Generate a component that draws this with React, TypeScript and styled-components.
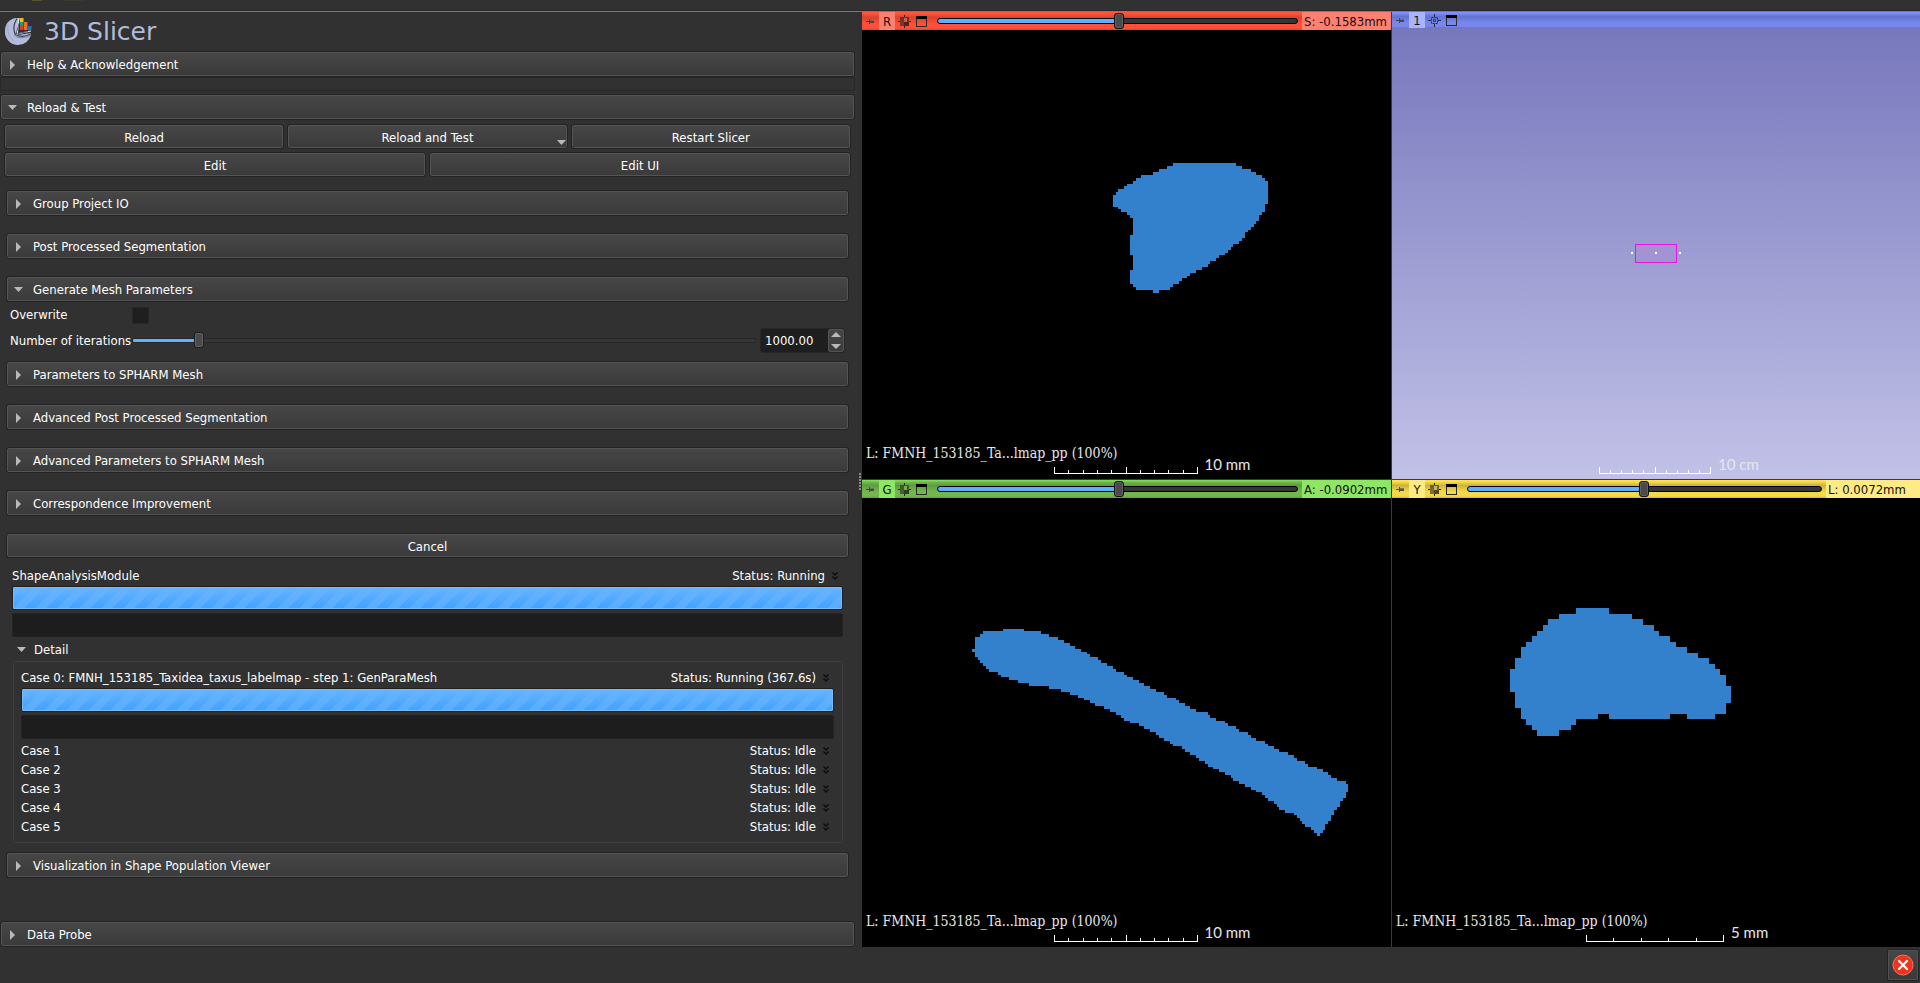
import React, { useState } from 'react';
import styled, { createGlobalStyle, css } from 'styled-components';

const GlobalStyle = createGlobalStyle`
  * { box-sizing: border-box; }
  body {
    margin: 0;
    background: #313131;
    color: #fff;
    font-family: "DejaVu Sans Condensed", "Noto Sans", sans-serif;
    font-size: 13px;
    line-height: 16px;
  }
  button, input { font: inherit; color: inherit; margin: 0; }
`;

/* ---------- shell ---------- */

const Shell = styled.div`
  min-height: 100vh;
  display: flex;
  flex-direction: column;
`;

const ToolbarEdge = styled.div`
  height: 12px;
  border-bottom: 1px solid #7c7c7c;
  box-shadow: inset 0 -1px 0 #282828;
  svg { display: block; margin-left: 28px; }
`;

const Main = styled.main`
  flex: 1;
  display: grid;
  grid-template-columns: minmax(0, 862fr) minmax(0, 1058fr);
`;

const StatusBar = styled.footer`
  height: 36px;
  display: flex;
  justify-content: flex-end;
`;

const ErrorButton = styled.button`
  width: 32px;
  height: 32px;
  margin: 2px 1px;
  padding: 0;
  display: grid;
  place-items: center;
  border: 1px solid #222;
  border-radius: 2px;
  background: linear-gradient(#464646, #3a3a3a);
  box-shadow: inset 0 0 0 1px #525252;
`;

/* ---------- module panel ---------- */

const Panel = styled.section`
  position: relative;
  display: flex;
  flex-direction: column;
  padding-right: 7px;
`;

const SplitGrip = styled.span`
  position: absolute;
  right: 1px;
  top: 461px;
  width: 2px;
  height: 17px;
  background: repeating-linear-gradient(#8a8a8a 0 2px, transparent 2px 3px);
`;

const Brand = styled.h1`
  margin: 0;
  height: 39px;
  padding-left: 4px;
  display: flex;
  align-items: center;
  gap: 11px;
  font: 400 25px/30px "DejaVu Sans", sans-serif;
  color: #b2bbdc;
`;

const raised = css`
  border: 1px solid #232323;
  border-radius: 3px;
  background: linear-gradient(#474747, #3a3a3a);
  box-shadow: inset 0 0 0 1px #545454;
  color: #fff;
`;

const Header = styled.button`
  ${raised}
  width: 100%;
  height: 26px;
  flex: none;
  display: flex;
  align-items: center;
  gap: 7px;
  padding: 1px 8px 0 7px;
  text-align: left;
`;

const ArrowBox = styled.svg`
  width: 12px;
  height: 12px;
  flex: none;
  fill: #b9b9b9;
`;

const EmptyFrame = styled.div`
  height: 14px;
  margin-bottom: 3px;
  border: 1px solid #282828;
`;

const ReloadBody = styled.div`
  display: flex;
  flex-direction: column;
  gap: 3px;
  padding: 4px 4px 3px;
`;

const ButtonRow = styled.div`
  display: flex;
  gap: 3px;
`;

const PushButton = styled.button`
  ${raised}
  position: relative;
  flex: 1 1 0;
  height: 25px;
  padding: 2px 8px 0;
  text-align: center;
`;

const MenuMark = styled(ArrowBox)`
  position: absolute;
  right: 0;
  bottom: 0;
`;

const Modules = styled.div`
  margin: 10px 6px 0;
`;

const Section = styled.div<{ $after?: number }>`
  margin-bottom: ${p => p.$after ?? 17}px;
`;

const Form = styled.div`
  display: grid;
  grid-template-columns: 120px 1fr;
  grid-template-rows: 26px 25px;
  align-items: center;
  column-gap: 2px;
  padding: 0 4px;
  label { white-space: nowrap; }
`;

const CheckBox = styled.input`
  appearance: none;
  width: 17px;
  height: 17px;
  background: #1f1f1f;
  border: 1px solid #272727;
`;

const SpinRow = styled.div`
  display: flex;
  align-items: center;
  gap: 4px;
`;

const IterSlider = styled.input`
  appearance: none;
  flex: 1;
  min-width: 0;
  height: 17px;
  background: transparent;
  &::-webkit-slider-runnable-track {
    height: 5px;
    border: 1px solid #272727;
    border-radius: 2px;
    background: linear-gradient(90deg, #5eb2ff var(--fill), #363636 var(--fill));
  }
  &::-webkit-slider-thumb {
    appearance: none;
    width: 10px;
    height: 16px;
    margin-top: -7px;
    border: 1px solid #1c1c1c;
    border-radius: 3px;
    background: #4a4a4a;
    box-shadow: inset 0 0 0 1px #666;
  }
`;

const SpinBox = styled.div`
  width: 85px;
  height: 25px;
  display: flex;
  border: 1px solid #262626;
  border-radius: 3px;
  background: #1e1e1e;
`;

const SpinInput = styled.input`
  flex: 1;
  min-width: 0;
  padding: 1px 4px 0;
  border: 0;
  background: transparent;
`;

const SpinButtons = styled.div`
  ${raised}
  border-width: 0;
  width: 16px;
  display: flex;
  flex-direction: column;
  button {
    flex: 1;
    padding: 0;
    border: 0;
    background: transparent;
    display: grid;
    place-items: center;
  }
`;

/* ---------- progress ---------- */

const Job = styled.div`
  padding: 8px 6px 9px;
`;

const JobLine = styled.div<{ $tall?: boolean }>`
  display: flex;
  align-items: center;
  height: ${p => (p.$tall ? 20 : 19)}px;
`;

const JobName = styled.span`
  flex: 1;
`;

const MoreButton = styled.button`
  width: 18px;
  height: 16px;
  padding: 0 0 0 2px;
  border: 0;
  background: transparent;
  display: grid;
  place-items: center;
`;

const ActiveBar = styled.div`
  height: 24px;
  margin-bottom: 3px;
  border: 1px solid #1f1f1f;
  border-radius: 2px;
  box-shadow: inset 0 0 0 1px #74bcff;
  background:
    linear-gradient(#68b4ff, #68b4ff00),
    linear-gradient(135deg, #58adff 25%, #40a2ff 25% 50%, #58adff 50% 75%, #40a2ff 75%) 0 0 / 22px 22px;
`;

const LogBox = styled.div`
  height: 24px;
  border: 1px solid #232323;
  border-radius: 2px;
  background: #1d1d1d;
`;

const DetailToggle = styled.button`
  display: flex;
  align-items: center;
  gap: 5px;
  height: 20px;
  margin: 3px 0 1px;
  padding: 0 5px;
  border: 0;
  background: transparent;
`;

const CaseGroup = styled.div`
  margin-left: 1px;
  padding: 6px 8px 6px 7px;
  border: 1px solid #3f3f3f;
  border-radius: 2px;
`;

const CaseList = styled.ul`
  list-style: none;
  margin: 2px 0 0;
  padding: 0;
`;

/* ---------- viewers ---------- */

const Viewers = styled.section`
  display: grid;
  grid-template-columns: minmax(0, 529fr) minmax(0, 528fr);
  grid-template-rows: 1fr 1fr;
  gap: 1px;
  background: #3a3a3a;
`;

const Viewer = styled.article`
  display: flex;
  flex-direction: column;
  min-height: 0;
`;

type Tone = { edge: string; dark: string; light: string; tag: string };

const tones: Record<string, Tone> = {
  red: { edge: '#ff553c', dark: '#d8432f', light: '#ff4f38', tag: '#ff8070' },
  blue: { edge: '#7d90ff', dark: '#6272cf', light: '#7787ee', tag: '#a9b3ff' },
  green: { edge: '#7fd957', dark: '#5e9d3f', light: '#72b64e', tag: '#8fe665' },
  yellow: { edge: '#ffe34d', dark: '#cdb43a', light: '#f4d94a', tag: '#ffeb83' },
};

const ViewBar = styled.header<{ $tone: Tone; $h: number }>`
  height: ${p => p.$h}px;
  display: flex;
  align-items: center;
  color: #111;
  background: linear-gradient(${p => p.$tone.edge} 0 1px, ${p => p.$tone.light} 2px, ${p => p.$tone.dark} 30%, ${p => p.$tone.light} 65%, ${p => p.$tone.light} 90%, ${p => p.$tone.dark});
`;

const IconButton = styled.button<{ $w: number }>`
  width: ${p => p.$w}px;
  height: 100%;
  padding: 0;
  border: 0;
  background: transparent;
  display: grid;
  place-items: center;
`;

const Tag = styled.span<{ $tone: Tone }>`
  width: 16px;
  height: 100%;
  margin-right: 2px;
  padding-top: 1px;
  display: grid;
  place-items: center;
  background: ${p => p.$tone.tag};
`;

const SliceSlider = styled.input`
  appearance: none;
  flex: 1;
  min-width: 0;
  height: 16px;
  margin: 0 4px 0 6px;
  background: transparent;
  &::-webkit-slider-runnable-track {
    height: 6px;
    border: 1px solid #000;
    border-radius: 3px;
    background: linear-gradient(90deg, #5eaeff var(--fill), #353535 var(--fill));
  }
  &::-webkit-slider-thumb {
    appearance: none;
    width: 10px;
    height: 16px;
    margin-top: -6px;
    border: 1px solid #111;
    border-radius: 3px;
    background: #4a4a4a;
    box-shadow: inset 0 0 0 1px #616161;
  }
`;

const Offset = styled.output<{ $tone: Tone; $w: number }>`
  min-width: ${p => p.$w}px;
  height: 100%;
  padding: 1px 2px 0;
  display: flex;
  align-items: center;
  background: ${p => p.$tone.tag};
`;

const Canvas = styled.div<{ $three?: boolean }>`
  position: relative;
  flex: 1;
  min-height: 0;
  background: ${p => (p.$three ? 'linear-gradient(#7777bd, #c2c2e8)' : '#000')};
`;

const Drawing = styled.svg`
  position: absolute;
  inset: 0;
  width: 100%;
  height: 100%;
`;

const Caption = styled.span`
  position: absolute;
  left: 4px;
  bottom: 16px;
  font: 14px/20px "DejaVu Serif Condensed", "Liberation Serif", serif;
  color: #e8e8e8;
`;

const Scale = styled.div<{ $w: number }>`
  position: absolute;
  left: calc(50% - 1px);
  bottom: 5px;
  width: ${p => p.$w}px;
  margin-left: -${p => p.$w / 2}px;
  svg { display: block; }
  span {
    position: absolute;
    left: 100%;
    bottom: 1px;
    margin-left: 7px;
    white-space: nowrap;
    font: 15px/18px Lato, sans-serif;
    color: #e6e6e6;
  }
`;

/* ---------- icons ---------- */

const Arrow = ({ open }: { open?: boolean }) => (
  <ArrowBox viewBox="0 0 12 12" aria-hidden>
    {open ? <path d="M0 3h9L4.500 8z" /> : <path d="M2 1v10l5-5z" />}
  </ArrowBox>
);

const Logo = () => (
  <svg width="29" height="29" viewBox="0 0 29 29" aria-hidden>
    <path d="M12 1C5 2 1 7 1 14a13 13 0 0 0 26 2l-13 2 1-17z" fill="#b3bcdd" />
    <path d="M13 1.500C10 6 9 12 11 17c4 3 10 3 16 0" fill="none" stroke="#3b3f4c" strokeWidth="1.200" />
    <path d="M15 1L13 17l14-3" fill="none" stroke="#e8ebf6" strokeWidth="1.200" />
    <path d="M12 17L15.500 5M12 17l12-2.500" fill="none" stroke="#555b70" />
    <path d="M10 18c5 4 12 3 17 0" fill="none" stroke="#8089a8" strokeWidth="1.200" />
    <path d="M4 8c-1 6 1 12 6 16" fill="none" stroke="#98a2c6" strokeWidth="1" />
    <rect x="16" y="1" width="3.500" height="4" fill="#f2c318" />
    <rect x="16" y="5" width="3.500" height="4" fill="#18a070" />
    <rect x="20" y="5" width="3.500" height="4" fill="#f06a20" />
    <rect x="16" y="9" width="3.500" height="4" fill="#e83820" />
    <rect x="20" y="9" width="3.500" height="4" fill="#f06a20" />
    <rect x="24" y="9" width="3.500" height="4" fill="#1f6fd0" />
  </svg>
);

const Pin = () => (
  <svg width="9" height="7" viewBox="0 0 9 7" aria-hidden opacity="0.85">
    <path d="M0 3h3V1h1v1h4v3H4v1H3V4H0z" fill="#3c3c3c" />
    <path d="M4 2h4v1H4z" fill="#6a6a6a" />
  </svg>
);

const SliceCross = ({ c }: { c: string }) => (
  <svg width="13" height="13" viewBox="0 0 13 13" shapeRendering="crispEdges" aria-hidden>
    <path d="M6 0h1v2H6zM6 11h1v2H6zM0 6h2v1H0zM11 6h2v1h-2z" fill="#222" />
    <rect x="2" y="2" width="9" height="9" fill="#241a16" opacity="0.55" />
    <rect x="6" y="3" width="3" height="4" fill={c} opacity="0.6" />
    <rect x="6" y="7" width="5" height="4" fill="#120c0a" opacity="0.4" />
  </svg>
);

const Target = () => (
  <svg width="13" height="13" viewBox="0 0 13 13" aria-hidden fill="none" stroke="#22283f">
    <path d="M6.500 0v3M6.500 10v3M0 6.500h3M10 6.500h3" />
    <rect x="3.500" y="3.500" width="6" height="6" strokeDasharray="2 1" />
    <rect x="5.500" y="5.500" width="2" height="2" opacity="0.7" />
  </svg>
);

const WindowIcon = () => (
  <svg width="11" height="11" viewBox="0 0 11 11" aria-hidden>
    <rect x="0.500" y="0.500" width="10" height="10" fill="none" stroke="#2b2b2b" />
    <rect width="11" height="3" fill="#000" />
  </svg>
);

const Chevrons = () => (
  <svg width="6" height="8" viewBox="0 0 6 8" aria-hidden fill="none" stroke="#0a0a0a" strokeWidth="1.300">
    <path d="M0.500 0.500L3 3l2.500-2.500M0.500 4.500L3 7l2.500-2.500" />
  </svg>
);

const Ruler = ({ w, n, mid }: { w: number; n: number; mid?: number }) => (
  <svg width={w} height="7" viewBox={`0 0 ${w} 7`} shapeRendering="crispEdges" fill="#fff" aria-hidden>
    <rect y="6" width={w} height="1" />
    {Array.from({ length: n + 1 }, (_, i) => {
      const major = i === 0 || i === n || i === mid;
      return (
        <rect
          key={i}
          x={Math.round((i * (w - 1)) / n)}
          y={major ? 0 : 3}
          width="1"
          height={major ? 6 : 3}
        />
      );
    })}
  </svg>
);

/* ---------- data ---------- */

const axialShape =
  'M279 69H468V79H486V88H513V97H528V105H546V114H555V123H564V192H555V216H546V225H537V243H528V252H522V261H513V270H504V276H495V294H486V303H477V312H459V321H453V330H444V339H435V345H417V354H408V363H390V372H384V381H366V390H348V399H330V408H321V414H306V423H297V432H279V441H270V450H237V459H219V450H168V441H159V432H150V390H159V345H150V285H159V234H150V225H141V216H123V207H114V201H99V165H108V156H114V147H132V138H141V132H159V123H168V114H183V105H219V96H237V87H261V78H279Z';

const coronalShape =
  'M129 57H192V63H243V72H267V81H294V90H312V99H330V108H345V117H363V126H381V132H390V141H414V150H423V159H441V168H459V177H468V186H492V195H501V201H519V210H537V219H552V228H570V237H588V246H612V255H621V264H648V270H657V279H675V288H690V297H708V306H744V315H750V324H768V333H795V339H804V348H828V357H837V366H864V375H873V384H888V393H915V402H924V408H942V417H957V426H984V435H1002V444H1011V453H1035V462H1044V471H1071V477H1089V486H1104V495H1113V504H1131V513H1158V522H1164V546H1158V564H1149V573H1140V591H1131V600H1122V615H1113V633H1104V642H1095V660H1089V669H1080V678H1071V669H1062V660H1053V651H1035V642H1026V633H1020V624H1011V615H1002V609H975V600H957V591H951V582H942V573H924V564H915V555H906V546H888V540H873V531H855V522H837V513H819V504H813V495H795V486H777V477H759V471H744V462H735V453H717V444H708V435H690V426H675V417H666V408H639V402H630V393H612V384H597V375H588V366H570V357H552V348H537V339H510V333H492V324H483V315H468V306H450V297H432V288H405V279H390V270H372V264H354V255H330V246H303V237H267V228H207V219H174V210H147V201H123V195H114V186H87V177H78V168H69V159H60V150H54V141H45V126H36V117H45V81H60V72H69V63H129Z';

const sagittalShape =
  'M258 54H357V72H426V87H459V105H492V123H507V138H540V156H558V171H591V189H624V204H657V222H675V237H690V255H708V288H723V339H708V372H675V387H591V372H540V387H357V372H324V387H258V405H243V420H207V438H141V420H126V405H108V387H93V354H75V306H60V237H75V204H93V171H108V156H126V138H141V123H159V105H174V87H207V72H258Z';

const caption = 'L: FMNH_153185_Ta...lmap_pp (100%)';

/* ---------- composed parts ---------- */

type SliceProps = {
  name: string;
  tone: Tone;
  start: number;
  offset: string;
  offsetWidth: number;
  box: string;
  at: string;
  shape: string;
  scale: { w: number; n: number; mid?: number; label: string };
};

const SliceView = ({ name, tone, start, offset, offsetWidth, box, at, shape, scale }: SliceProps) => {
  const [value, setValue] = useState(start);
  return (
    <Viewer>
      <ViewBar $tone={tone} $h={18}>
        <IconButton $w={17} aria-label="Pin controls"><Pin /></IconButton>
        <Tag $tone={tone}>{name}</Tag>
        <IconButton $w={15} aria-label="Fit to window"><SliceCross c={tone.tag} /></IconButton>
        <IconButton $w={19} aria-label="Maximize view"><WindowIcon /></IconButton>
        <SliceSlider
          type="range"
          min={0}
          max={1000}
          value={value}
          aria-label={`${name} slice offset`}
          onChange={e => setValue(Number(e.target.value))}
          style={{ '--fill': `${value / 10}%` } as React.CSSProperties}
        />
        <Offset $tone={tone} $w={offsetWidth}>{offset}</Offset>
      </ViewBar>
      <Canvas>
        <Drawing viewBox={box} shapeRendering="crispEdges" aria-hidden>
          <path transform={`translate(${at}) scale(${1 / 3})`} d={shape} fill="#3381cd" />
        </Drawing>
        <Caption>{caption}</Caption>
        <Scale $w={scale.w}>
          <Ruler w={scale.w} n={scale.n} mid={scale.mid} />
          <span>{scale.label}</span>
        </Scale>
      </Canvas>
    </Viewer>
  );
};

const Collapsible = ({ title, open, after }: { title: string; open?: boolean; after?: number }) => (
  <Section $after={after}>
    <Header aria-expanded={!!open}><Arrow open={open} />{title}</Header>
  </Section>
);

const JobRow = ({ name, status, tall }: { name: string; status: string; tall?: boolean }) => (
  <JobLine $tall={tall}>
    <JobName>{name}</JobName>
    <span>Status: {status}</span>
    <MoreButton aria-label={`Show log of ${name}`}><Chevrons /></MoreButton>
  </JobLine>
);

export default function App() {
  const [iterations, setIterations] = useState(1000);
  return (
    <Shell>
      <GlobalStyle />
      <ToolbarEdge>
        <svg width="60" height="2" viewBox="0 0 60 2" aria-hidden>
          <rect x="4" width="10" height="1" fill="#5a5325" />
          <rect x="35" width="20" height="1" fill="#3c3a2a" />
        </svg>
      </ToolbarEdge>
      <Main>
        <Panel>
          <Brand><Logo />3D Slicer</Brand>
          <Collapsible title="Help & Acknowledgement" after={0} />
          <EmptyFrame />
          <Collapsible title="Reload & Test" open after={0} />
          <ReloadBody>
            <ButtonRow>
              <PushButton>Reload</PushButton>
              <PushButton>
                Reload and Test
                <MenuMark viewBox="0 0 12 12" aria-hidden><path d="M2 4h9L6.500 9z" /></MenuMark>
              </PushButton>
              <PushButton>Restart Slicer</PushButton>
            </ButtonRow>
            <ButtonRow>
              <PushButton>Edit</PushButton>
              <PushButton>Edit UI</PushButton>
            </ButtonRow>
          </ReloadBody>

          <Modules>
            <Collapsible title="Group Project IO" />
            <Collapsible title="Post Processed Segmentation" />
            <Collapsible title="Generate Mesh Parameters" open after={0} />
            <Section $after={8}>
              <Form>
                <label htmlFor="overwrite">Overwrite</label>
                <CheckBox id="overwrite" type="checkbox" />
                <label htmlFor="iterations">Number of iterations</label>
                <SpinRow>
                  <IterSlider
                    type="range"
                    min={0}
                    max={9999}
                    value={iterations}
                    aria-label="Number of iterations"
                    onChange={e => setIterations(Number(e.target.value))}
                    style={{ '--fill': `${iterations / 99.99}%` } as React.CSSProperties}
                  />
                  <SpinBox>
                    <SpinInput id="iterations" value={iterations.toFixed(2)} readOnly />
                    <SpinButtons>
                      <button aria-label="Increase" onClick={() => setIterations(n => n + 1)}>
                        <svg width="10" height="5" viewBox="0 0 10 5"><path d="M0 5h10L5 0z" fill="#b9b9b9" /></svg>
                      </button>
                      <button aria-label="Decrease" onClick={() => setIterations(n => n - 1)}>
                        <svg width="10" height="5" viewBox="0 0 10 5"><path d="M0 0h10L5 5z" fill="#b9b9b9" /></svg>
                      </button>
                    </SpinButtons>
                  </SpinBox>
                </SpinRow>
              </Form>
            </Section>
            <Collapsible title="Parameters to SPHARM Mesh" />
            <Collapsible title="Advanced Post Processed Segmentation" />
            <Collapsible title="Advanced Parameters to SPHARM Mesh" />
            <Collapsible title="Correspondence Improvement" />
            <ButtonRow>
              <PushButton>Cancel</PushButton>
            </ButtonRow>

            <Job>
              <JobRow name="ShapeAnalysisModule" status="Running" tall />
              <ActiveBar role="progressbar" aria-label="ShapeAnalysisModule progress" />
              <LogBox />
              <DetailToggle aria-expanded><Arrow open />Detail</DetailToggle>
              <CaseGroup>
                <JobRow
                  name="Case 0: FMNH_153185_Taxidea_taxus_labelmap - step 1: GenParaMesh"
                  status="Running (367.6s)"
                  tall
                />
                <ActiveBar role="progressbar" aria-label="Case 0 progress" />
                <LogBox />
                <CaseList>
                  {[1, 2, 3, 4, 5].map(n => (
                    <li key={n}><JobRow name={`Case ${n}`} status="Idle" /></li>
                  ))}
                </CaseList>
              </CaseGroup>
            </Job>
            <Collapsible title="Visualization in Shape Population Viewer" after={43} />
          </Modules>
          <Collapsible title="Data Probe" after={0} />
          <SplitGrip />
        </Panel>

        <Viewers>
          <SliceView
            name="R" tone={tones.red} start={503} offset="S: -0.1583mm" offsetWidth={89}
            box="0 0 529 449" at="218 110" shape={axialShape}
            scale={{ w: 144, n: 10, mid: 5, label: '10 mm' }}
          />
          <Viewer>
            <ViewBar $tone={tones.blue} $h={16}>
              <IconButton $w={17} aria-label="Pin controls"><Pin /></IconButton>
              <Tag $tone={tones.blue}>1</Tag>
              <IconButton $w={15} aria-label="Center view"><Target /></IconButton>
              <IconButton $w={19} aria-label="Maximize view"><WindowIcon /></IconButton>
            </ViewBar>
            <Canvas $three>
              <Drawing viewBox="0 0 528 451" shapeRendering="crispEdges" aria-hidden>
                <rect x="243.500" y="216.500" width="41" height="18" fill="#a493d2" stroke="#f010e8" />
                <path d="M239 224h2v2h-2zM263 224h2v2h-2zM287 224h2v2h-2z" fill="#fff" />
              </Drawing>
              <Scale $w={112}>
                <Ruler w={112} n={10} mid={5} />
                <span>10 cm</span>
              </Scale>
            </Canvas>
          </Viewer>
          <SliceView
            name="G" tone={tones.green} start={503} offset="A: -0.0902mm" offsetWidth={89}
            box="0 0 529 449" at="98 112" shape={coronalShape}
            scale={{ w: 144, n: 10, mid: 5, label: '10 mm' }}
          />
          <SliceView
            name="Y" tone={tones.yellow} start={498} offset="L: 0.0072mm" offsetWidth={94}
            box="0 0 528 449" at="98 92" shape={sagittalShape}
            scale={{ w: 138, n: 5, label: '5 mm' }}
          />
        </Viewers>
      </Main>
      <StatusBar>
        <ErrorButton aria-label="Show errors">
          <svg width="22" height="22" viewBox="0 0 22 22" aria-hidden>
            <circle cx="11" cy="11" r="10" fill="#f0341c" stroke="#f4755f" />
            <path d="M7 7l8 8M15 7l-8 8" stroke="#fff" strokeWidth="2.200" strokeLinecap="round" />
          </svg>
        </ErrorButton>
      </StatusBar>
    </Shell>
  );
}
